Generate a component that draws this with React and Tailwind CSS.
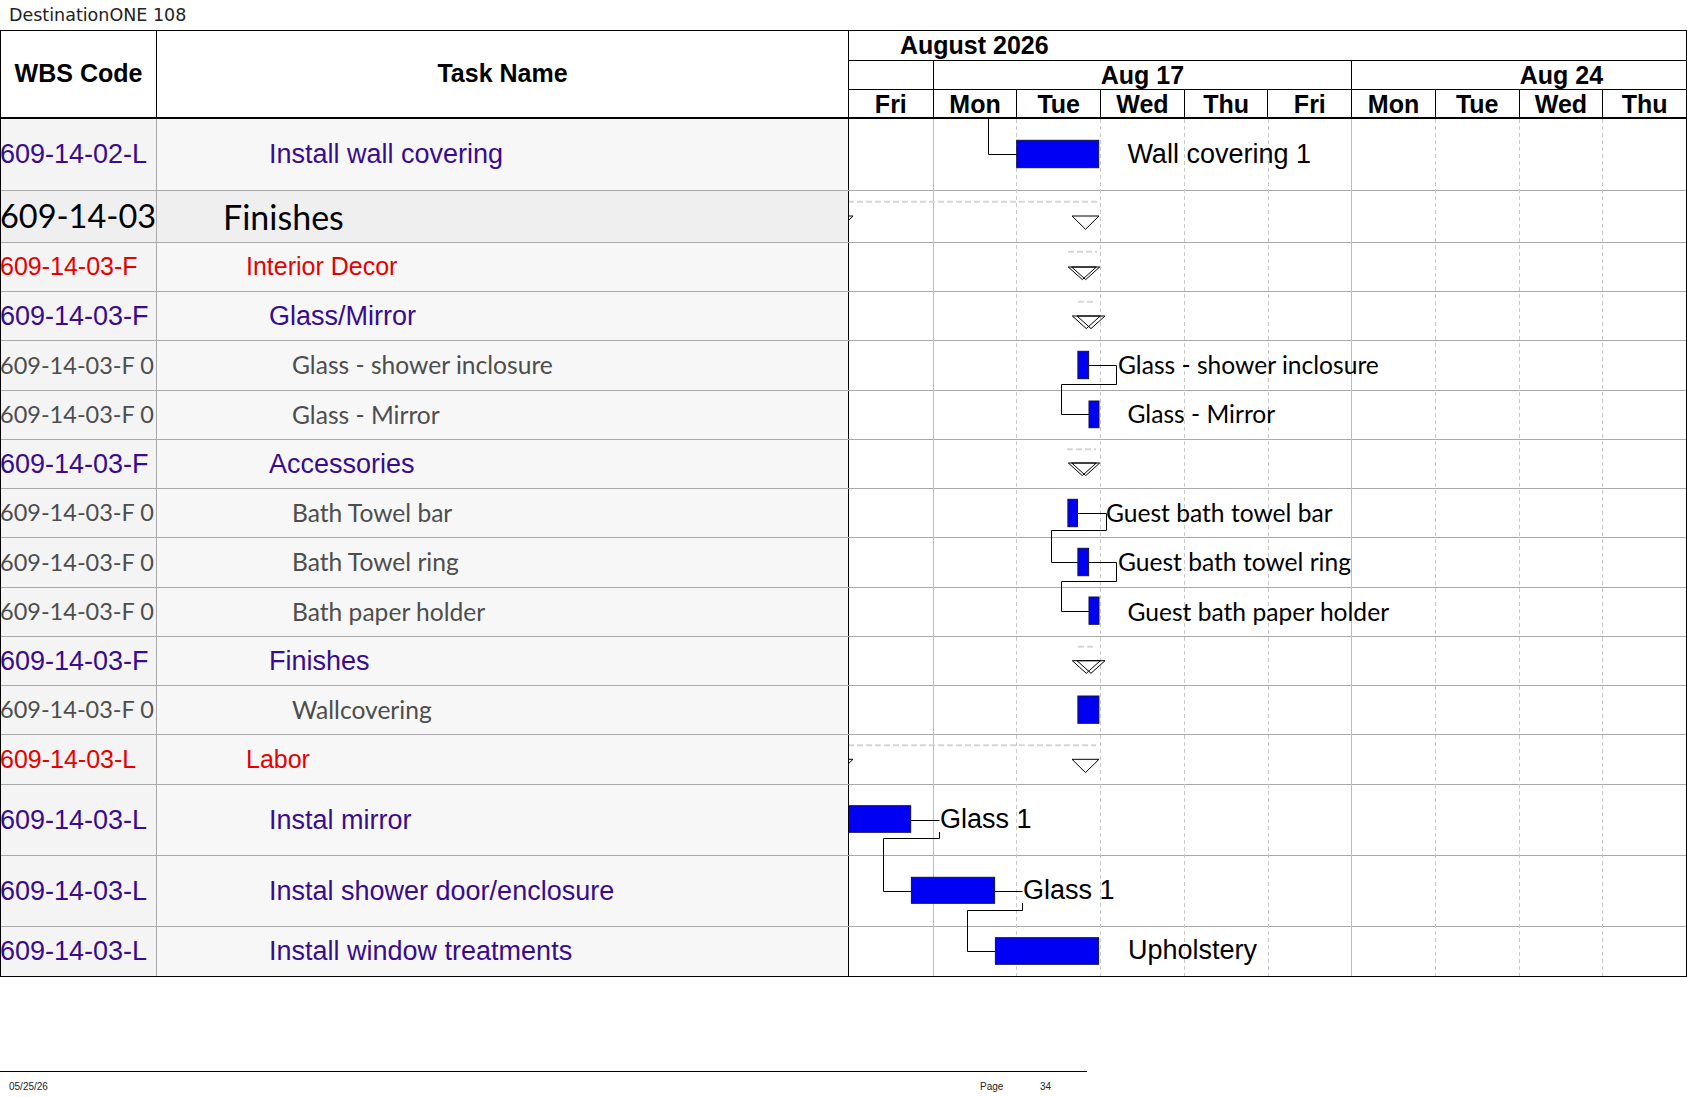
import React from 'react';

const arial = "font-['Liberation_Sans',Arial,sans-serif]";
const lato = "font-['Lato','Open_Sans',sans-serif]";

// text style per outline level
const styles = {
  task: { wbsText: `${arial} text-[27px] text-[#380b8f]`, text: `${arial} text-[27px] text-[#380b8f]`, indent: 'pl-[112px]', bg: 'bg-[#f7f7f7]', wbsBg: 'bg-[#f4f4f4]' },
  top: { wbsText: `${lato} text-[32.5px] text-black`, text: `${lato} text-[34px] text-black`, indent: 'pl-[66px]', bg: 'bg-[#efefef]', wbsBg: 'bg-[#efefef]' },
  group: { wbsText: `${arial} text-[25px] text-[#e60000]`, text: `${arial} text-[25px] text-[#e60000]`, indent: 'pl-[89px]', bg: 'bg-[#f7f7f7]', wbsBg: 'bg-[#f4f4f4]' },
  item: { wbsText: `${lato} text-[23.5px] text-[#4d4d4d]`, text: `${lato} text-[24.6px] text-[#4d4d4d]`, indent: 'pl-[135px]', bg: 'bg-[#f7f7f7]', wbsBg: 'bg-[#f4f4f4]' },
};

const rows = [
  { h: 'h-[72px]', wbs: '609-14-02-L', name: 'Install wall covering', kind: 'task' },
  { h: 'h-[52px]', wbs: '609-14-03', name: 'Finishes', kind: 'top' },
  { h: 'h-[49px]', wbs: '609-14-03-F', name: 'Interior Decor', kind: 'group' },
  { h: 'h-[49px]', wbs: '609-14-03-F', name: 'Glass/Mirror', kind: 'task' },
  { h: 'h-[50px]', wbs: '609-14-03-F 0', name: 'Glass - shower inclosure', kind: 'item' },
  { h: 'h-[49px]', wbs: '609-14-03-F 0', name: 'Glass - Mirror', kind: 'item' },
  { h: 'h-[49px]', wbs: '609-14-03-F', name: 'Accessories', kind: 'task' },
  { h: 'h-[49px]', wbs: '609-14-03-F 0', name: 'Bath Towel bar', kind: 'item' },
  { h: 'h-[50px]', wbs: '609-14-03-F 0', name: 'Bath Towel ring', kind: 'item' },
  { h: 'h-[49px]', wbs: '609-14-03-F 0', name: 'Bath paper holder', kind: 'item' },
  { h: 'h-[49px]', wbs: '609-14-03-F', name: 'Finishes', kind: 'task' },
  { h: 'h-[49px]', wbs: '609-14-03-F 0', name: 'Wallcovering', kind: 'item' },
  { h: 'h-[50px]', wbs: '609-14-03-L', name: 'Labor', kind: 'group' },
  { h: 'h-[71px]', wbs: '609-14-03-L', name: 'Instal mirror', kind: 'task' },
  { h: 'h-[71px]', wbs: '609-14-03-L', name: 'Instal shower door/enclosure', kind: 'task' },
  { h: 'h-[49px]', wbs: '609-14-03-L', name: 'Install window treatments', kind: 'task' },
];

const days = ['Fri', 'Mon', 'Tue', 'Wed', 'Thu', 'Fri', 'Mon', 'Tue', 'Wed', 'Thu'];
const COL = 83.7;

// bars in page coordinates: x, y, w, h
const bars = [
  [1016.7, 140.3, 82, 27.4],
  [1077.9, 351.3, 10.7, 27.4],
  [1089, 401, 10, 26.7],
  [1067.9, 499.3, 9.6, 27.4],
  [1077.9, 548.3, 10.7, 27.4],
  [1089, 597, 10, 27.3],
  [1077.9, 696, 21, 27.3],
  [846, 805.7, 64.7, 26.6],
  [911.4, 877.3, 83.2, 26],
  [995.4, 937.7, 103.2, 26.6],
];

const links = [
  'M988.5 119 V154.5 H1016.7',
  'M1088.6 365.5 H1116.5 V384.5 H1061.5 V414.5 H1089',
  'M1077.5 513.5 H1106.5 V530.5 H1051.5 V562.5 H1077.9',
  'M1088.6 562.5 H1116.5 V581.5 H1061.5 V611.5 H1089',
  'M910.7 820.5 H939.5',
  'M939.5 832 V838.5 H883.5 V891.5 H911.4',
  'M994.6 891.5 H1022.5',
  'M1022.5 903 V910.5 H967.5 V951.5 H995.4',
];

const dashes = [
  'M848 201.7 H1098',
  'M1068 251.7 H1097',
  'M1078 301.7 H1095',
  'M1067 449.3 H1096',
  'M1078 646.7 H1096',
  'M848 745.3 H1096',
];

// summary end markers: x, y, w, h
const tris = [
  [1072, 216, 27, 13.3],
  [826, 216, 27, 13.3],
  [1068.3, 267, 28, 12.6],
  [1071.7, 267, 28, 12.6],
  [1072.3, 316, 28, 12.6],
  [1077, 316, 28, 12.6],
  [1068.3, 463, 28, 12.6],
  [1071.7, 463, 28, 12.6],
  [1072.3, 660.7, 28, 12.6],
  [1077, 660.7, 28, 12.6],
  [1072, 759.3, 27, 13.3],
  [826, 759.3, 27, 13.3],
];

const labels = [
  { x: 1127.4, y: 163, t: 'Wall covering 1', f: 'arial' },
  { x: 1118, y: 374.3, t: 'Glass - shower inclosure', f: 'cal' },
  { x: 1127.5, y: 423.3, t: 'Glass - Mirror', f: 'cal' },
  { x: 1106, y: 521.7, t: 'Guest bath towel bar', f: 'cal' },
  { x: 1118, y: 570.5, t: 'Guest bath towel ring', f: 'cal' },
  { x: 1127.5, y: 620.5, t: 'Guest bath paper holder', f: 'cal' },
  { x: 940, y: 828.3, t: 'Glass 1', f: 'arial' },
  { x: 1023, y: 899.3, t: 'Glass 1', f: 'arial' },
  { x: 1127.9, y: 958.5, t: 'Upholstery', f: 'arial' },
];

function GanttOverlay() {
  return (
    <svg width="837" height="857" className="absolute left-[848px] top-0 pointer-events-none">
      <g transform="translate(-849 -119)">
        {days.slice(1).map((d, k) => {
          const i = k + 1;
          const x = Math.round(849 + i * COL) + 0.5;
          const solid = i === 1 || i === 6;
          return (
            <line
              key={i}
              x1={x}
              x2={x}
              y1={119}
              y2={976}
              stroke={solid ? '#bdbdbd' : '#c9c9c9'}
              strokeWidth="1"
              strokeDasharray={solid ? undefined : '4 3'}
            />
          );
        })}
        {dashes.map((d, i) => (
          <path key={i} d={d} stroke="#d6d6d6" strokeWidth="2" strokeDasharray="6 3" fill="none" />
        ))}
        {tris.map(([x, y, w, h], i) => (
          <polygon key={i} points={`${x},${y} ${x + w},${y} ${x + w / 2},${y + h}`} fill="none" stroke="#000" strokeWidth="1" />
        ))}
        {links.map((d, i) => (
          <path key={i} d={d} stroke="#000" strokeWidth="1" fill="none" />
        ))}
        {bars.map(([x, y, w, h], i) => (
          <rect key={i} x={x} y={y} width={w} height={h} fill="#0000f5" stroke="#10104a" strokeWidth="1" />
        ))}
        {labels.map((l, i) => (
          <text
            key={i}
            x={l.x}
            y={l.y}
            fill="#000"
            fontSize={l.f === 'arial' ? 27 : 24.6}
            fontFamily={l.f === 'arial' ? 'Liberation Sans, Arial, sans-serif' : 'Lato, Open Sans, sans-serif'}
          >
            {l.t}
          </text>
        ))}
      </g>
    </svg>
  );
}

export default function App() {
  return (
    <div className={`w-[1687px] h-[1097px] bg-white overflow-hidden ${arial}`}>
      <div className="h-[30px] flex items-center pl-[9px] text-[17.5px] text-[#222] font-['DejaVu_Sans',sans-serif]">
        DestinationONE 108
      </div>

      <div className="w-[1687px] border border-black">
        {/* header */}
        <div className="flex h-[88px] border-b-2 border-black">
          <div className="w-[156px] shrink-0 border-r border-black flex items-center justify-center text-[25px] font-bold">
            WBS Code
          </div>
          <div className="w-[691px] shrink-0 flex items-center justify-center text-[25px] font-bold">
            Task Name
          </div>
          <div className="flex-1 border-l border-black flex flex-col text-[25px] leading-none font-bold">
            <div className="h-[30px] border-b border-black flex items-center pl-[51px]">August 2026</div>
            <div className="h-[29px] border-b border-black grid grid-cols-[83.7px_418.5px_1fr] grid-rows-[28px]">
              <div />
              <div className="border-l border-black flex items-center justify-center">Aug 17</div>
              <div className="border-l border-black overflow-hidden">
                <div className="w-[418.5px] h-full flex items-center justify-center">Aug 24</div>
              </div>
            </div>
            <div className="h-[27px] grid grid-cols-10 grid-rows-[27px]">
              {days.map((d, i) => (
                <div key={i} className={i === 0 ? 'flex items-center justify-center pt-px' : 'flex items-center justify-center pt-px border-l border-black'}>
                  {d}
                </div>
              ))}
            </div>
          </div>
        </div>

        {/* body */}
        <div className="relative">
          {rows.map((r, i) => {
            const s = styles[r.kind];
            const last = i === rows.length - 1;
            return (
              <div key={i} className={`flex ${r.h} ${last ? '' : 'border-b border-[#a9a9a9]'}`}>
                <div className={`w-[156px] shrink-0 border-r border-[#a9a9a9] ${s.wbsBg} flex items-center overflow-hidden whitespace-nowrap ${s.wbsText}`}>
                  <span className="-ml-px">{r.wbs}</span>
                </div>
                <div className={`w-[691px] shrink-0 ${s.bg} flex items-center whitespace-nowrap ${s.indent} ${s.text}`}>
                  {r.name}
                </div>
                <div className="flex-1 border-l border-black bg-white" />
              </div>
            );
          })}
          <GanttOverlay />
        </div>
      </div>

      <div className="mt-[94px] w-[1087px] border-t border-black flex text-[10px] text-[#222] pt-[7px]">
        <span className="w-[980px] pl-[9px]">05/25/26</span>
        <span className="w-[60px]">Page</span>
        <span>34</span>
      </div>
    </div>
  );
}
